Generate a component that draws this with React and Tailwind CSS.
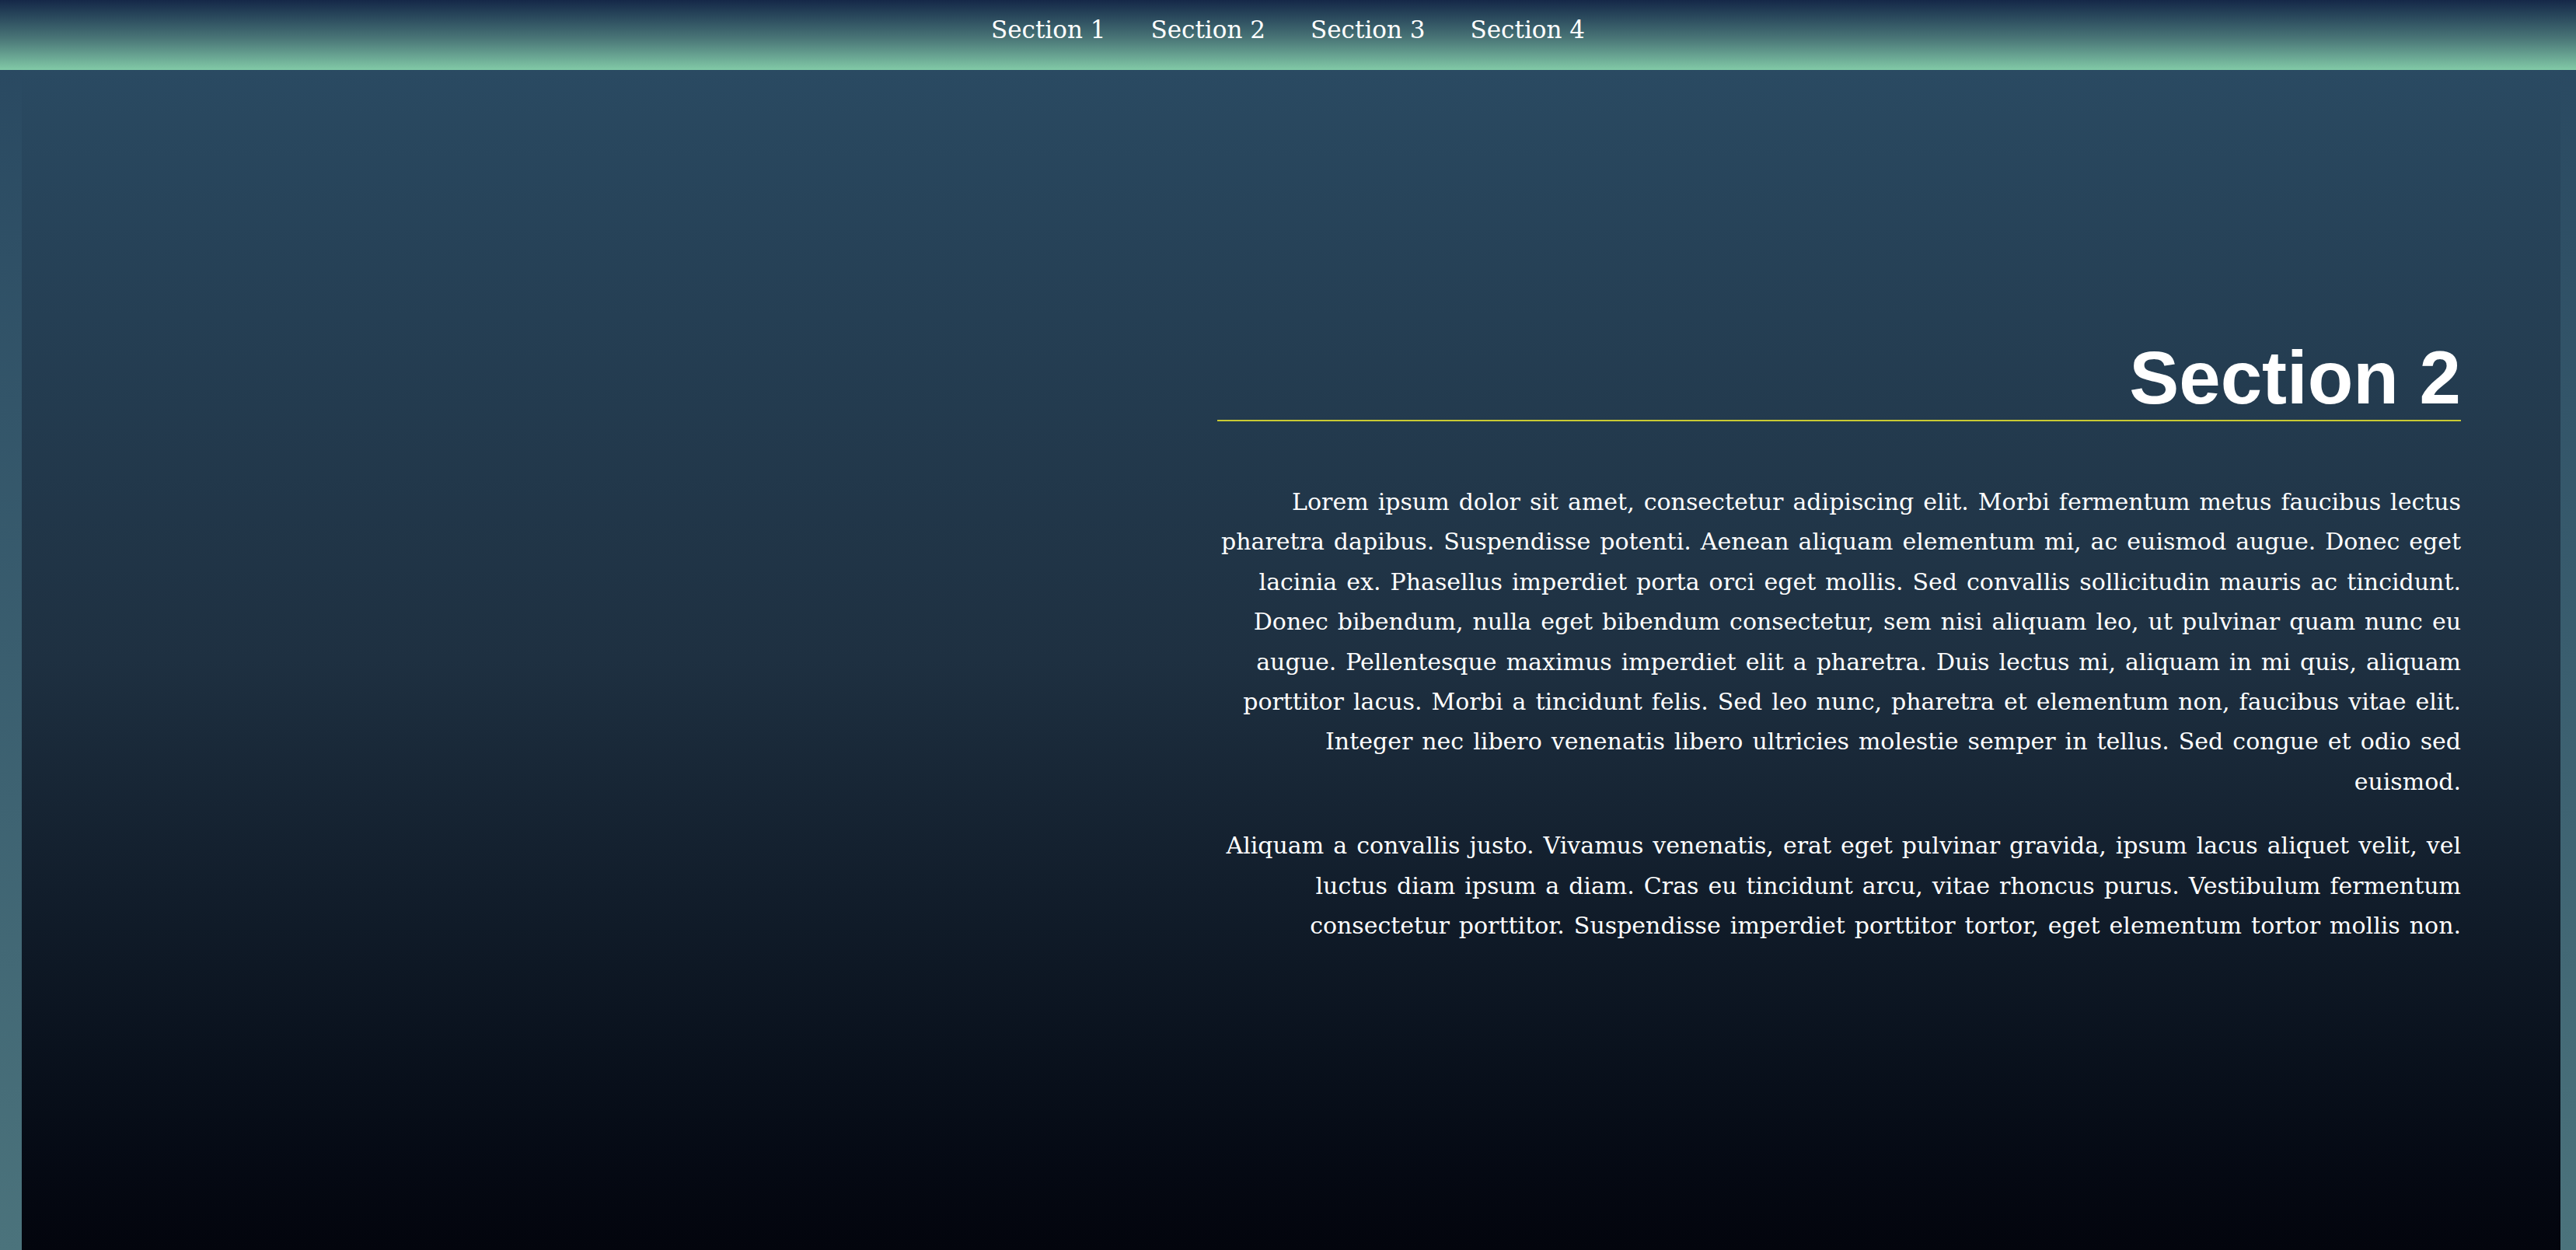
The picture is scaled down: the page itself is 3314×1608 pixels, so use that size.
import React from 'react';

const links = ['Section 1', 'Section 2', 'Section 3', 'Section 4'];

const serif = { fontFamily: '"DejaVu Serif", "Liberation Serif", serif' };

const App = () => {
  return (
    <div className="min-h-screen flex flex-col bg-gradient-to-b from-[#284760] to-[#4b737c]">
      <nav className="h-[90px] shrink-0 flex items-center justify-center gap-[58px] bg-gradient-to-b from-[#152848] via-[#4a7677] via-55% to-[#82caa7] pb-[14px]">
        {links.map((l) => (
          <a key={l} href="#" className="text-white text-[31px] leading-none" style={serif}>
            {l}
          </a>
        ))}
      </nav>

      <main className="flex-1 ml-[28px] mr-[20px] flex justify-end pr-[128px] bg-gradient-to-b from-[#2a4a62] via-[#1e3041] via-50% to-[#03050d]">
        <section className="w-[1600px] pt-[348px]">
          <h2
            className="text-right text-white font-bold text-[96px] leading-none pb-[6px] border-b-2 border-[#c9ca33]"
            style={{ fontFamily: '"Liberation Sans", Arial, sans-serif' }}
          >
            Section 2
          </h2>
          <div className="mt-[78px] text-right text-white text-[30px] leading-[51.4px] [word-spacing:2.5px] space-y-[31px]" style={serif}>
            <p>
              Lorem ipsum dolor sit amet, consectetur adipiscing elit. Morbi fermentum metus faucibus lectus
              pharetra dapibus. Suspendisse potenti. Aenean aliquam elementum mi, ac euismod augue. Donec eget
              lacinia ex. Phasellus imperdiet porta orci eget mollis. Sed convallis sollicitudin mauris ac tincidunt.
              Donec bibendum, nulla eget bibendum consectetur, sem nisi aliquam leo, ut pulvinar quam nunc eu
              augue. Pellentesque maximus imperdiet elit a pharetra. Duis lectus mi, aliquam in mi quis, aliquam
              porttitor lacus. Morbi a tincidunt felis. Sed leo nunc, pharetra et elementum non, faucibus vitae elit.
              Integer nec libero venenatis libero ultricies molestie semper in tellus. Sed congue et odio sed
              euismod.
            </p>
            <p>
              Aliquam a convallis justo. Vivamus venenatis, erat eget pulvinar gravida, ipsum lacus aliquet velit, vel
              luctus diam ipsum a diam. Cras eu tincidunt arcu, vitae rhoncus purus. Vestibulum fermentum
              consectetur porttitor. Suspendisse imperdiet porttitor tortor, eget elementum tortor mollis non.
            </p>
          </div>
        </section>
      </main>
    </div>
  );
};

export default App;
